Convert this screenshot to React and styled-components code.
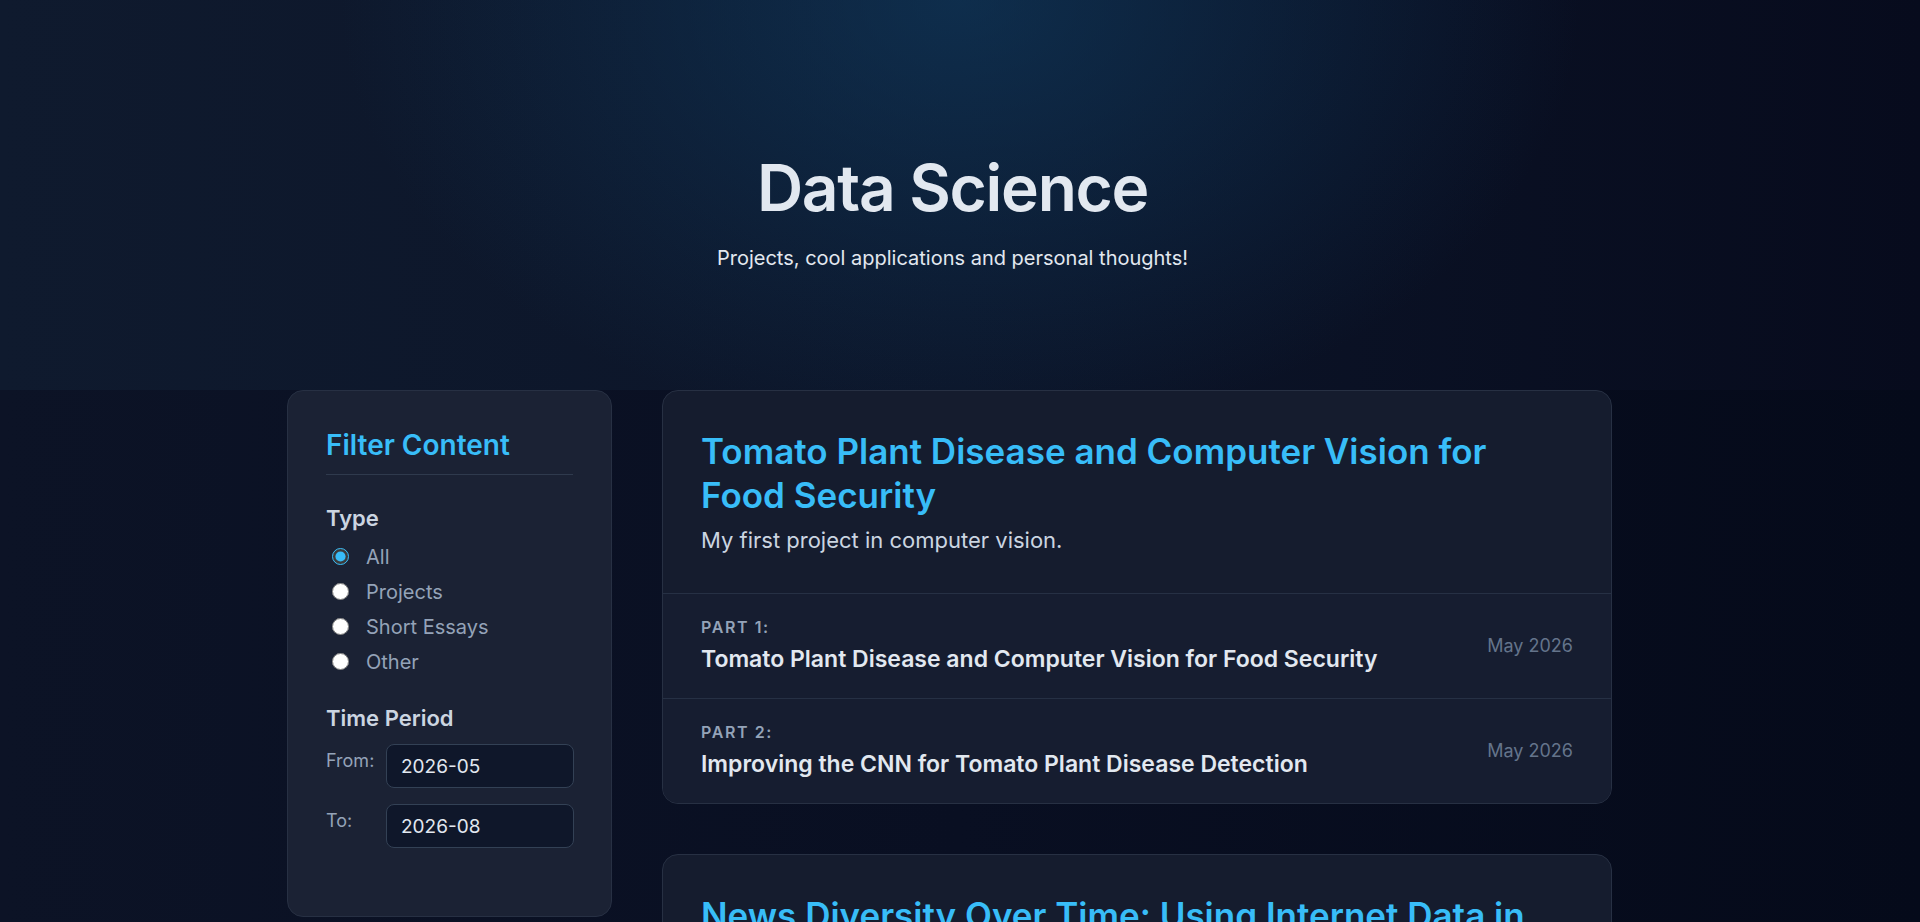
import React, { useState } from 'react';
import styled, { createGlobalStyle } from 'styled-components';

const GlobalStyle = createGlobalStyle`
    * { box-sizing: border-box; }
    html, body { margin: 0; padding: 0; }
    body {
        font-family: Inter, "Noto Sans", sans-serif;
        background: #050a1a;
        color: #e2e8f0;
    }
`;

const series = [
    {
        title: 'Tomato Plant Disease and Computer Vision for Food Security',
        description: 'My first project in computer vision.',
        parts: [
            { title: 'Tomato Plant Disease and Computer Vision for Food Security', date: 'May 2026' },
            { title: 'Improving the CNN for Tomato Plant Disease Detection', date: 'May 2026' },
        ],
    },
    {
        title: 'News Diversity Over Time: Using Internet Data in Media Research',
        description: 'Measuring how varied the news really is, with data scraped from the web.',
        parts: [
            { title: 'Collecting Ten Years of Headlines', date: 'Jun 2026' },
            { title: 'Topic Models and What They Miss', date: 'Jul 2026' },
            { title: 'Is the News Getting More Alike?', date: 'Aug 2026' },
        ],
    },
    {
        title: 'Why I Keep a Lab Notebook',
        description: 'A short essay on writing things down.',
        parts: [
            { title: 'Why I Keep a Lab Notebook', date: 'Aug 2026' },
        ],
    },
];

const types = ['All', 'Projects', 'Short Essays', 'Other'];

const App = () => {
    const [type, setType] = useState('All');
    const [from, setFrom] = useState('2026-05');
    const [to, setTo] = useState('2026-08');

    return (
        <Page>
            <GlobalStyle />
            <Hero>
                <Title>Data Science</Title>
                <Tagline>Projects, cool applications and personal thoughts!</Tagline>
            </Hero>

            <Layout>
                <Sidebar>
                    <SidebarTitle>Filter Content</SidebarTitle>

                    <Section $top={30}>
                        <SectionTitle>Type</SectionTitle>
                        <RadioList>
                            {types.map(t => (
                                <RadioRow key={t}>
                                    <input
                                        type="radio"
                                        name="type"
                                        checked={type === t}
                                        onChange={() => setType(t)}
                                    />
                                    {t}
                                </RadioRow>
                            ))}
                        </RadioList>
                    </Section>

                    <Section $top={28}>
                        <SectionTitle>Time Period</SectionTitle>
                        <DateList>
                            <DateRow>
                                <DateLabel>From:</DateLabel>
                                <DateInput value={from} onChange={e => setFrom(e.target.value)} />
                            </DateRow>
                            <DateRow>
                                <DateLabel>To:</DateLabel>
                                <DateInput value={to} onChange={e => setTo(e.target.value)} />
                            </DateRow>
                        </DateList>
                    </Section>
                </Sidebar>

                <Feed>
                    {series.map(s => (
                        <Card key={s.title}>
                            <CardHeader>
                                <CardTitle>{s.title}</CardTitle>
                                <CardDescription>{s.description}</CardDescription>
                            </CardHeader>
                            {s.parts.map((p, i) => (
                                <PartRow key={p.title}>
                                    <div>
                                        <PartNumber>Part {i + 1}:</PartNumber>
                                        <PartTitle>{p.title}</PartTitle>
                                    </div>
                                    <PartDate>{p.date}</PartDate>
                                </PartRow>
                            ))}
                        </Card>
                    ))}
                </Feed>
            </Layout>
        </Page>
    );
};

const Page = styled.div`
    min-height: 100vh;
    background: linear-gradient(90deg, #0c1326 0%, #090f22 50%, #050a1a 100%);
`;

const Hero = styled.header`
    padding: 150px 35px 117px 20px;
    text-align: center;
    background:
        radial-gradient(ellipse 620px 440px at 50% 0%, rgba(16, 62, 100, 0.6), rgba(16, 62, 100, 0) 100%),
        linear-gradient(90deg, #0f1a2e 0%, #0c1529 50%, #070b1d 100%);
`;

const Title = styled.h1`
    margin: 0 0 16px;
    font-size: 64px;
    line-height: 1.2;
    font-weight: 600;
    letter-spacing: -0.02em;
    color: #e2e8f0;
`;

const Tagline = styled.p`
    margin: 0;
    font-size: 20px;
    line-height: 1.5;
    color: #e2e8f0;
`;

const Layout = styled.main`
    display: grid;
    grid-template-columns: 325px 950px;
    column-gap: 50px;
    justify-content: center;
    align-items: start;
    padding: 0 21px 80px 0;
`;

const Sidebar = styled.aside`
    padding: 38px 38px 68px;
    border: 1px solid #273043;
    border-radius: 16px;
    background: #1b2234;
`;

const SidebarTitle = styled.h2`
    margin: 0;
    padding-bottom: 12px;
    border-bottom: 1px solid #2f3a4d;
    font-size: 28px;
    line-height: 1.2;
    font-weight: 600;
    color: #38bdf8;
`;

const Section = styled.section`
    margin-top: ${props => props.$top}px;
`;

const SectionTitle = styled.h3`
    margin: 0 0 10px;
    font-size: 22px;
    line-height: 1.2;
    font-weight: 600;
    color: #cbd5e1;
`;

const RadioList = styled.div`
    display: flex;
    flex-direction: column;
    gap: 5px;
`;

const RadioRow = styled.label`
    display: flex;
    align-items: center;
    gap: 17px;
    padding-left: 6px;
    font-size: 20px;
    line-height: 30px;
    color: #94a3b8;
    cursor: pointer;

    & > input {
        width: 17px;
        height: 17px;
        margin: 0;
        accent-color: #38bdf8;
    }
`;

const DateList = styled.div`
    display: flex;
    flex-direction: column;
    gap: 16px;
    padding-top: 3px;
`;

const DateRow = styled.div`
    display: flex;
    align-items: flex-start;
`;

const DateLabel = styled.span`
    width: 60px;
    flex-shrink: 0;
    padding-top: 3px;
    font-size: 18px;
    line-height: 27px;
    color: #94a3b8;
`;

const DateInput = styled.input`
    width: 188px;
    height: 44px;
    padding: 0 14px;
    border: 1px solid #334155;
    border-radius: 8px;
    background: #0f172a;
    font-family: inherit;
    font-size: 19px;
    color: #e2e8f0;
    outline: none;
`;

const Feed = styled.div`
    display: flex;
    flex-direction: column;
    gap: 50px;
`;

const Card = styled.article`
    border: 1px solid #273043;
    border-radius: 16px;
    background: #151c2e;
    overflow: hidden;
`;

const CardHeader = styled.div`
    padding: 38px;
    border-bottom: 1px solid #263044;
`;

const CardTitle = styled.h2`
    margin: 0 0 8px;
    font-size: 35px;
    line-height: 44px;
    font-weight: 600;
    color: #38bdf8;
`;

const CardDescription = styled.p`
    margin: 0;
    font-size: 22px;
    line-height: 30px;
    color: #cbd5e1;
`;

const PartRow = styled.div`
    display: flex;
    align-items: center;
    justify-content: space-between;
    gap: 24px;
    padding: 23px 38px 24px;
    background: #161d30;

    & + & {
        border-top: 1px solid #263044;
    }
`;

const PartNumber = styled.div`
    margin-bottom: 6px;
    font-size: 16px;
    line-height: 21px;
    font-weight: 600;
    letter-spacing: 0.1em;
    text-transform: uppercase;
    color: #94a3b8;
`;

const PartTitle = styled.div`
    font-size: 23px;
    line-height: 30px;
    font-weight: 600;
    color: #e2e8f0;
`;

const PartDate = styled.span`
    flex-shrink: 0;
    font-size: 18px;
    color: #64748b;
`;

export default App;
